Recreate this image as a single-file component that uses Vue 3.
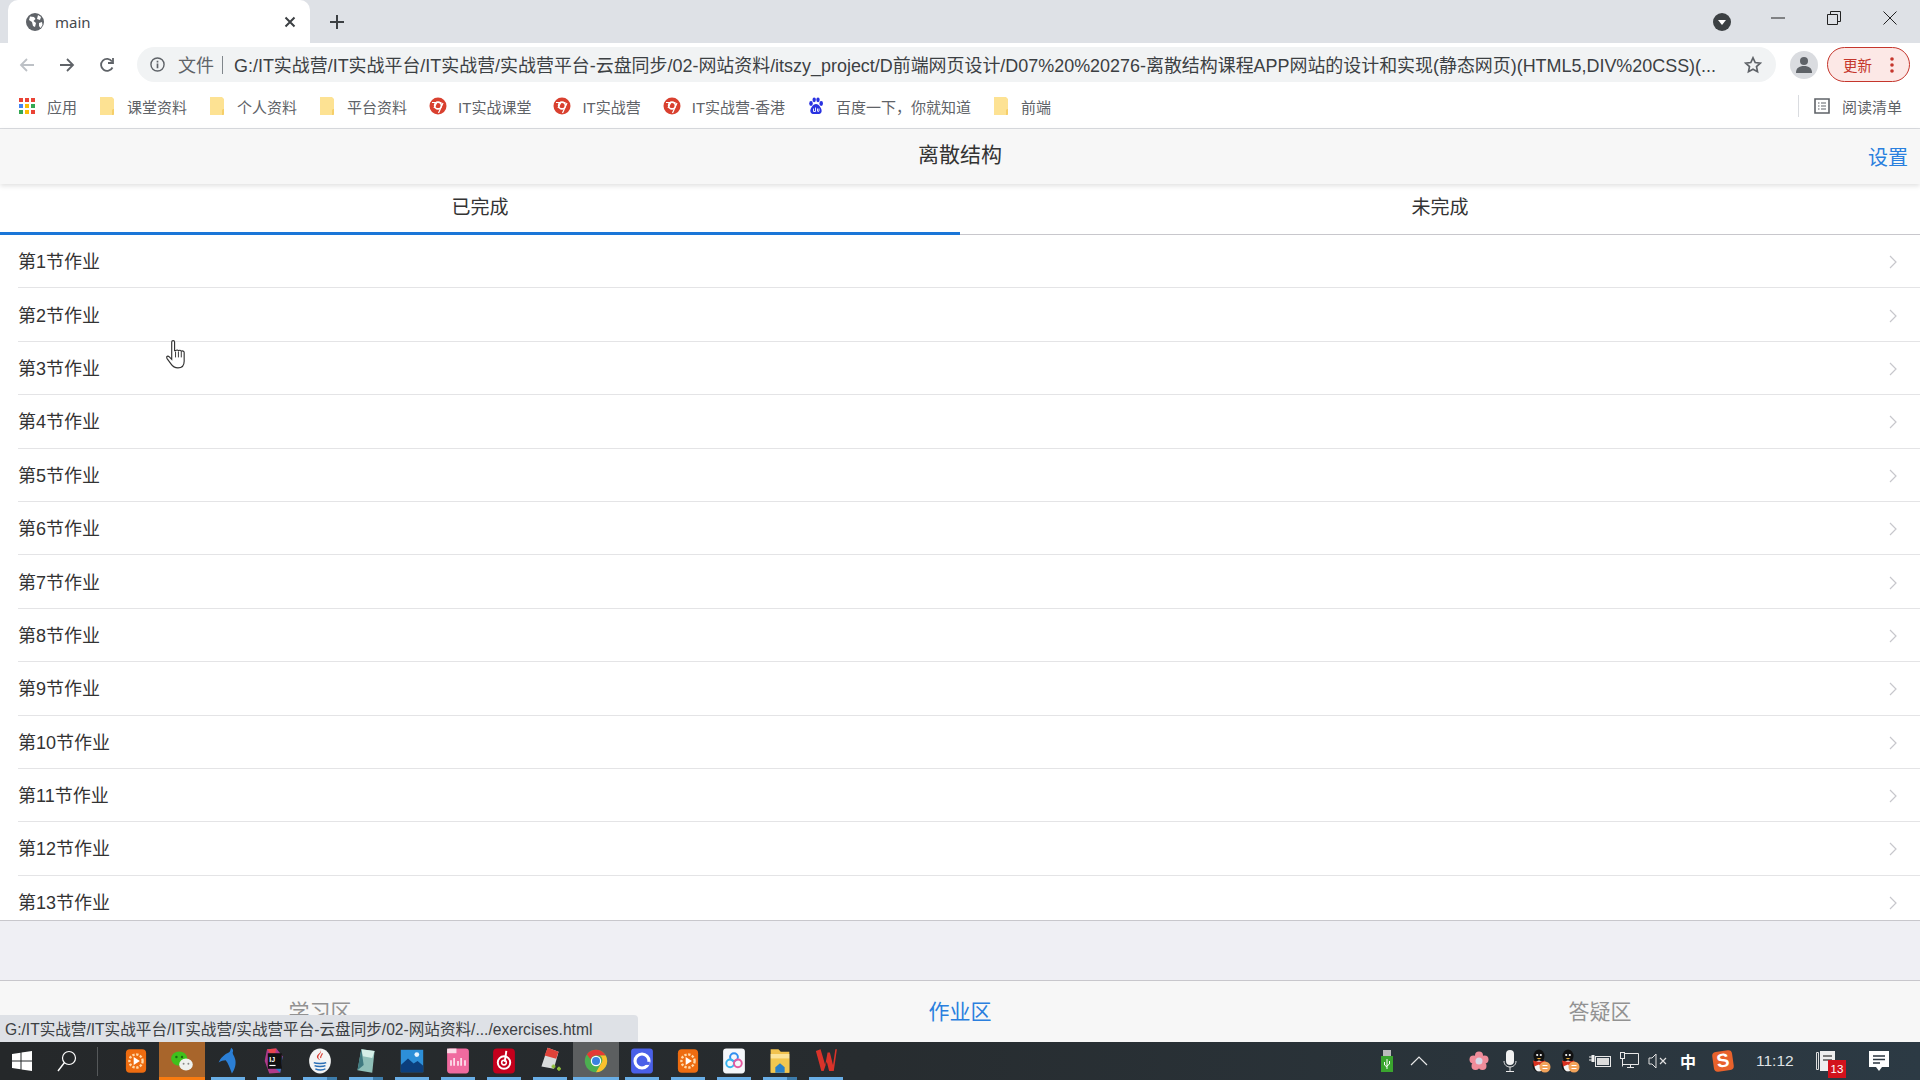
<script setup>
const bookmarks = [
  { icon: 'bm-apps', label: '应用' },
  { icon: 'bm-folder', label: '课堂资料' },
  { icon: 'bm-folder', label: '个人资料' },
  { icon: 'bm-folder', label: '平台资料' },
  { icon: 'bm-it', label: 'IT实战课堂' },
  { icon: 'bm-it', label: 'IT实战营' },
  { icon: 'bm-it', label: 'IT实战营-香港' },
  { icon: 'bm-baidu', label: '百度一下，你就知道' },
  { icon: 'bm-folder', label: '前端' }
]

const rows = Array.from({ length: 13 }, (_, i) => `第${i + 1}节作业`)

const taskIcons = [
  { icon: 'ti-orange' },
  { icon: 'ti-wechat', state: 'alert' },
  { icon: 'ti-dolphin', state: 'open' },
  { icon: 'ti-idea', state: 'open' },
  { icon: 'ti-java', state: 'stack' },
  { icon: 'ti-note', state: 'stack' },
  { icon: 'ti-photo', state: 'open' },
  { icon: 'ti-pink', state: 'open' },
  { icon: 'ti-music', state: 'open' },
  { icon: 'ti-rednote', state: 'open' },
  { icon: 'ti-chrome', state: 'active' },
  { icon: 'ti-blue', state: 'open' },
  { icon: 'ti-orange', state: 'open' },
  { icon: 'ti-cloud', state: 'open' },
  { icon: 'ti-explorer', state: 'stack' },
  { icon: 'ti-wps', state: 'open' }
]

const trayIcons = [
  { icon: 'tr-usb', width: 32, gap: 0 },
  { icon: 'tr-up', width: 32, gap: 29 },
  { icon: 'tr-flower', width: 30, gap: 0 },
  { icon: 'tr-mic', width: 31, gap: 0 },
  { icon: 'tr-qq', width: 31, gap: 0 },
  { icon: 'tr-qq', width: 28, gap: 0 },
  { icon: 'tr-battery', width: 31, gap: 0 },
  { icon: 'tr-monitor', width: 28, gap: 0 },
  { icon: 'tr-speaker', width: 30, gap: 0 }
]
</script>

<template>
  <div class="screen">
    <svg class="sprite" aria-hidden="true">
      <defs>
        <symbol id="bm-apps" viewBox="0 0 16 16">
          <rect x="0" y="0" width="4" height="4" fill="#ea4335" /><rect x="6" y="0" width="4" height="4" fill="#ea4335" /><rect x="12" y="0" width="4" height="4" fill="#ea4335" />
          <rect x="0" y="6" width="4" height="4" fill="#4285f4" /><rect x="6" y="6" width="4" height="4" fill="#fbbc05" /><rect x="12" y="6" width="4" height="4" fill="#34a853" />
          <rect x="0" y="12" width="4" height="4" fill="#34a853" /><rect x="6" y="12" width="4" height="4" fill="#fbbc05" /><rect x="12" y="12" width="4" height="4" fill="#ea4335" />
        </symbol>
        <symbol id="bm-folder" viewBox="0 0 16 18">
          <path d="M1 0h12l2 2v15a1 1 0 0 1-1 1H1z" fill="#fde293" />
          <path d="M14 12h1v5a1 1 0 0 1-1 1h-1v-5z" fill="#f6cf6a" />
        </symbol>
        <symbol id="bm-it" viewBox="0 0 18 18">
          <circle cx="9" cy="9" r="8.5" fill="#d9402f" />
          <circle cx="9" cy="8.5" r="3.4" fill="none" stroke="#fff" stroke-width="1.6" />
          <path d="M3 5.5h9.5M14 6l-4.5 10M5 11l3-6" stroke="#fff" stroke-width="1.2" fill="none" />
        </symbol>
        <symbol id="bm-baidu" viewBox="0 0 18 18">
          <ellipse cx="4" cy="6.5" rx="1.8" ry="2.4" fill="#2932e1" />
          <ellipse cx="7.2" cy="2.8" rx="1.7" ry="2.4" fill="#2932e1" />
          <ellipse cx="11" cy="2.8" rx="1.7" ry="2.4" fill="#2932e1" />
          <ellipse cx="14.2" cy="6.5" rx="1.8" ry="2.4" fill="#2932e1" />
          <path d="M9 7c3 0 6.500 5 5.500 8-.8 2.500-3.500 2-5.500 2s-4.700.5-5.500-2C2.500 12 6 7 9 7z" fill="#2932e1" />
          <path d="M6.500 11.500v3h2v-4M10.500 11.500v2.500c0 .7 1.500.7 1.500 0v-2.500" stroke="#fff" stroke-width=".9" fill="none" />
        </symbol>

        <symbol id="ti-orange" viewBox="0 0 30 36">
          <rect x="2" y="3" width="26" height="30" rx="5" fill="#ee6c10" />
          <circle cx="15" cy="18" r="8.500" fill="none" stroke="#ffd9a8" stroke-width="3" stroke-dasharray="3 2" />
          <path d="M12 13l8 5-8 5z" fill="#fff" />
        </symbol>
        <symbol id="ti-wechat" viewBox="0 0 30 30">
          <ellipse cx="11.500" cy="12" rx="10" ry="9" fill="#3fc11c" />
          <circle cx="8" cy="10" r="1.500" fill="#1b6b10" /><circle cx="15" cy="10" r="1.500" fill="#1b6b10" />
          <ellipse cx="20" cy="19.500" rx="8.500" ry="7.500" fill="#eef1ee" />
          <circle cx="17" cy="18.500" r="1.200" fill="#888" /><circle cx="23" cy="18.500" r="1.200" fill="#888" />
        </symbol>
        <symbol id="ti-dolphin" viewBox="0 0 30 36">
          <path d="M19 1c-1 3-1 5-3 6-5 2-11 7-13 13 3-2 6-3 9-3 3 3 5 9 8 17 4-6 6-13 4-19-1-4-3-5-3-8 1-2 1-4-2-6z" fill="#2b7fd6" />
        </symbol>
        <symbol id="ti-idea" viewBox="0 0 30 36">
          <path d="M6 3l12-1 8 10-3 21-14 1-6-16z" fill="#b03a8c" />
          <path d="M6 3l12-1-3 12z" fill="#e9474e" />
          <path d="M26 12l-3 21-8-7z" fill="#2a7fcc" />
          <rect x="7" y="8" width="18" height="20" fill="#111" />
          <text x="9" y="19" fill="#fff" font-size="9" font-weight="700" font-family="Liberation Sans, sans-serif">IJ</text>
          <rect x="9" y="23" width="8" height="1.500" fill="#fff" />
        </symbol>
        <symbol id="ti-java" viewBox="0 0 30 36">
          <ellipse cx="15" cy="18" rx="14" ry="16" fill="#f3f4f4" />
          <path d="M16 4c2 4-4 6-3 10 .4 1.500 2 2 2 3-1-.5-4-2-4-4 0-4 6-5 5-9z" fill="#d8382c" />
          <path d="M18 8c0 2-3 4-2 6" stroke="#d8382c" stroke-width="1.500" fill="none" />
          <path d="M7 20c3 1.500 13 1.500 16 0M8 24c3 1.500 11 1.500 14 0M9 28c4 2 10 2 13 0" stroke="#2b6fb5" stroke-width="1.800" fill="none" />
        </symbol>
        <symbol id="ti-note" viewBox="0 0 30 36">
          <path d="M9 3l17 2-3 28-19-3z" fill="#8fbfb8" />
          <path d="M9 3l17 2-3 9-12-2z" fill="#d5efe8" />
          <path d="M4 30l5-27 3 20z" fill="#3f7a80" />
        </symbol>
        <symbol id="ti-photo" viewBox="0 0 30 30">
          <rect x="1" y="1" width="28" height="28" fill="#2d8fd8" />
          <path d="M1 29V20l9-8 7 6 5-3 7 6v8z" fill="#0c3f7d" />
          <circle cx="21" cy="7" r="3" fill="#e8f4ff" />
        </symbol>
        <symbol id="ti-pink" viewBox="0 0 30 36">
          <rect x="1" y="2" width="28" height="32" rx="4" fill="#f06a9f" />
          <rect x="1" y="2" width="12" height="6" fill="#fbdce8" />
          <path d="M6 24v-7M10 24v-10M15 24v-6M19 24v-10M24 24v-7" stroke="#fde3ee" stroke-width="2.200" />
        </symbol>
        <symbol id="ti-music" viewBox="0 0 30 36">
          <rect x="1" y="2" width="28" height="32" rx="5" fill="#c4001c" />
          <circle cx="15" cy="20" r="8" fill="none" stroke="#fff" stroke-width="2.500" />
          <circle cx="15" cy="20" r="3" fill="none" stroke="#fff" stroke-width="2" />
          <path d="M18 5l-2 14" stroke="#fff" stroke-width="2.500" />
        </symbol>
        <symbol id="ti-rednote" viewBox="0 0 30 36">
          <path d="M12 1l14 5-6 22-16-3z" fill="#d9dcdc" />
          <path d="M12 1l14 5-3 9-15-4z" fill="#e0433a" />
          <path d="M17 25h5M19.500 22.500v5M24 28h5M26.500 25.500v5" stroke="#8fbf3a" stroke-width="2.500" />
        </symbol>
        <symbol id="ti-chrome" viewBox="0 0 30 30">
          <circle cx="15" cy="15" r="14" fill="#4caf50" />
          <path d="M15 1a14 14 0 0 1 12.100 7H15a7 7 0 0 0-6.700 5L3.600 6.800A14 14 0 0 1 15 1z" fill="#e53935" />
          <path d="M27.100 8A14 14 0 0 1 15 29l6.100-10.500A7 7 0 0 0 20 8z" fill="#fbc02d" />
          <circle cx="15" cy="15" r="6.500" fill="#fff" />
          <circle cx="15" cy="15" r="5" fill="#3b82e0" />
        </symbol>
        <symbol id="ti-blue" viewBox="0 0 30 36">
          <rect x="1" y="2" width="28" height="32" rx="4" fill="#4a60e8" />
          <circle cx="15" cy="18" r="9" fill="none" stroke="#fff" stroke-width="4" />
          <rect x="18" y="19" width="7" height="4" fill="#4a60e8" />
        </symbol>
        <symbol id="ti-cloud" viewBox="0 0 30 36">
          <rect x="1" y="2" width="28" height="32" rx="4" fill="#f5f7fa" />
          <circle cx="15" cy="13" r="5" fill="none" stroke="#2f8ef0" stroke-width="2.500" />
          <circle cx="10" cy="21" r="5" fill="none" stroke="#39b5f0" stroke-width="2.500" />
          <circle cx="20" cy="21" r="5" fill="none" stroke="#e65aa0" stroke-width="2.500" />
        </symbol>
        <symbol id="ti-explorer" viewBox="0 0 30 36">
          <path d="M3 3h10l3 3h11v27H3z" fill="#f1c24e" />
          <rect x="3" y="9" width="24" height="6" fill="#fbe39a" />
          <rect x="3" y="15" width="24" height="18" fill="#f2c750" />
          <path d="M9 26l6-5 6 5v7H9z" fill="#2a80c8" />
        </symbol>
        <symbol id="ti-wps" viewBox="0 0 30 36">
          <path d="M2 5l6-2 6 20 3-16h3l4 16 3-20h2l-4 28h-6l-3-12-4 12H9z" fill="#d9332a" />
        </symbol>

        <symbol id="tr-usb" viewBox="0 0 14 24">
          <rect x="3" y="1" width="8" height="6" fill="#bbb" />
          <rect x="1" y="7" width="12" height="16" fill="#3aa52e" />
          <path d="M7 10v10M4.500 13v3l2.500 2M9.500 12v3l-2.500 2" stroke="#fff" stroke-width="1" fill="none" />
        </symbol>
        <symbol id="tr-up" viewBox="0 0 18 18">
          <path d="M1 13l8-8 8 8" fill="none" stroke="#e8e8e8" stroke-width="1.200" />
        </symbol>
        <symbol id="tr-flower" viewBox="0 0 20 20">
          <circle cx="10" cy="4.500" r="4" fill="#f08c9a" /><circle cx="4.500" cy="8.500" r="4" fill="#f08c9a" /><circle cx="15.500" cy="8.500" r="4" fill="#f08c9a" /><circle cx="6.500" cy="15" r="4" fill="#f08c9a" /><circle cx="13.500" cy="15" r="4" fill="#f08c9a" />
          <circle cx="10" cy="10" r="3.500" fill="#d8d8e8" />
        </symbol>
        <symbol id="tr-mic" viewBox="0 0 16 24">
          <rect x="4" y="1" width="8" height="15" rx="4" fill="#f2f2f2" />
          <path d="M2 12c0 8 12 8 12 0M8 18v4M4 22.500h8" stroke="#e8e8e8" stroke-width="1" fill="none" />
        </symbol>
        <symbol id="tr-qq" viewBox="0 0 20 24">
          <ellipse cx="8" cy="7" rx="5.500" ry="6.500" fill="#111" />
          <ellipse cx="8" cy="16" rx="6.500" ry="7" fill="#111" />
          <ellipse cx="8" cy="17" rx="4.500" ry="5.500" fill="#f4f4f4" />
          <circle cx="6.200" cy="6" r="1.100" fill="#fff" /><circle cx="9.800" cy="6" r="1.100" fill="#fff" />
          <path d="M5.500 9h5l-2.500 1.500z" fill="#f2b33a" />
          <path d="M2 11.500c3.500 1.500 8.500 1.500 12 0l.5 2-4 1 .5 4-3-3-5 2z" fill="#d7301f" />
          <circle cx="14" cy="18" r="5.500" fill="#f2a35a" />
          <path d="M11.500 16.500h5M11.500 19.500h5" stroke="#fff" stroke-width="1.200" />
        </symbol>
        <symbol id="tr-battery" viewBox="0 0 22 16">
          <rect x="6.500" y="3.500" width="15" height="10" fill="#2a3640" stroke="#e8e8e8" />
          <rect x="8" y="5" width="12" height="7" fill="#dcdcdc" />
          <path d="M0 4h3M0 7h3" stroke="#eee" /><rect x="2.500" y="2" width="3" height="7" fill="#eee" />
        </symbol>
        <symbol id="tr-monitor" viewBox="0 0 20 20">
          <path d="M3.500 2.500h16v11h-16zM8 16.500h7M11.500 13.500v3" fill="none" stroke="#e8e8e8" />
          <rect x="1.500" y="1.500" width="4" height="6" fill="#2a3640" stroke="#e8e8e8" />
          <path d="M3.500 7.500v8" stroke="#e8e8e8" />
        </symbol>
        <symbol id="tr-speaker" viewBox="0 0 20 16">
          <path d="M1 5h3l4-4v14l-4-4H1z" fill="none" stroke="#e0e0e0" />
          <path d="M12 5l6 6M18 5l-6 6" stroke="#e0e0e0" stroke-width="1.200" />
        </symbol>
      </defs>
    </svg>

    <div class="tabstrip">
      <div class="tab">
        <svg class="globe" viewBox="0 0 18 18" width="18" height="18">
          <circle cx="9" cy="9" r="9" fill="#5f6368" />
          <path d="M4 3.500l4 .5 1.500 2-2 2 2.500 2-1 4-2-1-1-4-3-2zM12 2l3 2-1 3-3-1zM13 10l3-1 .5 3-2 3-1.500-2z" fill="#fff" />
        </svg>
        <span class="tab-title">main</span>
        <svg class="tab-close" viewBox="0 0 12 12" width="12" height="12"><path d="M1.500 1.500l9 9M10.500 1.500l-9 9" stroke="#3c4043" stroke-width="2" /></svg>
      </div>
      <svg class="new-tab" viewBox="0 0 16 16" width="16" height="16"><path d="M8 1v14M1 8h14" stroke="#3c4043" stroke-width="2" /></svg>
      <svg class="tab-search" viewBox="0 0 18 18" width="18" height="18">
        <circle cx="9" cy="9" r="9" fill="#3c4043" />
        <path d="M5 7h8l-4 5z" fill="#fff" />
      </svg>
      <div class="win-btn"><svg viewBox="0 0 14 14" width="14" height="14"><path d="M0 7h14" stroke="#222" stroke-width="1" /></svg></div>
      <div class="win-btn"><svg viewBox="0 0 14 14" width="14" height="14"><path d="M.5 3.500h10v10H.5zM3.500 3.500v-3h10v10h-3" fill="none" stroke="#222" /></svg></div>
      <div class="win-btn"><svg viewBox="0 0 14 14" width="14" height="14"><path d="M.5.500l13 13M13.500.500l-13 13" stroke="#222" /></svg></div>
    </div>

    <div class="toolbar">
      <svg class="nav-icon" viewBox="0 0 16 16" width="16" height="16"><path d="M15 8H2M8 2L2 8l6 6" fill="none" stroke="#bdc1c6" stroke-width="1.800" /></svg>
      <svg class="nav-icon" viewBox="0 0 16 16" width="16" height="16"><path d="M1 8h13M8 2l6 6-6 6" fill="none" stroke="#5f6368" stroke-width="1.800" /></svg>
      <svg class="nav-icon" viewBox="0 0 16 16" width="16" height="16"><path d="M13.500 10.500A6 6 0 1 1 13 4.500M14 1v5H9" fill="none" stroke="#5f6368" stroke-width="1.800" /></svg>
      <div class="omnibox">
        <svg viewBox="0 0 16 16" width="15" height="15" class="info"><circle cx="8" cy="8" r="7" fill="none" stroke="#5f6368" stroke-width="1.500" /><path d="M8 7v5M8 4v1.800" stroke="#5f6368" stroke-width="1.800" /></svg>
        <span class="scheme">文件</span>
        <span class="pipe"></span>
        <span class="url">G:/IT实战营/IT实战平台/IT实战营/实战营平台-云盘同步/02-网站资料/itszy_project/D前端网页设计/D07%20%20276-离散结构课程APP网站的设计和实现(静态网页)(HTML5,DIV%20CSS)(...</span>
        <svg viewBox="0 0 18 18" width="18" height="18" class="star"><path d="M9 1.800l2.200 4.700 5.100.6-3.800 3.500 1 5.100L9 13.200l-4.500 2.500 1-5.100L1.700 7.100l5.100-.6z" fill="none" stroke="#5f6368" stroke-width="1.700" /></svg>
      </div>
      <div class="avatar">
        <svg viewBox="0 0 18 18" width="18" height="18"><circle cx="9" cy="5" r="4" fill="#5f6368" /><path d="M1 17c0-5 3-7 8-7s8 2 8 7z" fill="#5f6368" /></svg>
      </div>
      <div class="update">
        <span>更新</span>
        <svg viewBox="0 0 4 16" width="4" height="16"><circle cx="2" cy="2" r="1.800" fill="#c5362c" /><circle cx="2" cy="8" r="1.800" fill="#c5362c" /><circle cx="2" cy="14" r="1.800" fill="#c5362c" /></svg>
      </div>
    </div>

    <div class="bookmarks">
      <div v-for="b in bookmarks" :key="b.label" class="bookmark">
        <svg :class="['bm-icon', b.icon]"><use :href="'#' + b.icon" /></svg>
        <span>{{ b.label }}</span>
      </div>
      <div class="reading">
        <svg viewBox="0 0 16 16" width="16" height="16"><path d="M1 1h14v14H1z" fill="none" stroke="#5f6368" stroke-width="1.600" /><path d="M4 5h1.500M7 5h5M4 8h1.500M7 8h5M4 11h1.500M7 11h5" stroke="#5f6368" stroke-width="1.200" /></svg>
        <span>阅读清单</span>
      </div>
    </div>

    <header class="nav-bar">
      <span class="nav-title">离散结构</span>
      <a class="nav-right">设置</a>
    </header>

    <div class="segments">
      <div class="segment active">已完成</div>
      <div class="segment">未完成</div>
    </div>

    <ul class="list">
      <li v-for="row in rows" :key="row" class="row">
        <span class="row-text">{{ row }}</span>
        <svg class="chevron" viewBox="0 0 8 14" width="8" height="14"><path d="M1 1l6 6-6 6" fill="none" stroke="#c7c7cc" stroke-width="1.200" /></svg>
      </li>
    </ul>

    <div class="gap"></div>

    <footer class="app-tabs">
      <div class="app-tab">学习区</div>
      <div class="app-tab current">作业区</div>
      <div class="app-tab">答疑区</div>
    </footer>

    <div class="taskbar">
      <div class="start">
        <svg viewBox="0 0 20 20" width="20" height="20"><path d="M0 3l8.500-1.200V9.500H0zM9.500 1.600L20 0v9.500H9.500zM0 10.500h8.500v7.700L0 17zM9.500 10.500H20V20L9.500 18.400z" fill="#fff" /></svg>
      </div>
      <div class="search">
        <svg viewBox="0 0 20 22" width="20" height="22"><circle cx="12" cy="8" r="6.500" fill="none" stroke="#fff" stroke-width="1.200" /><path d="M7.500 12.500L1 21" stroke="#fff" stroke-width="1.400" /></svg>
      </div>
      <div class="task-sep"></div>
      <div v-for="(t, i) in taskIcons" :key="i" :class="['task', t.state]">
        <svg width="24" height="28"><use :href="'#' + t.icon" /></svg>
      </div>
      <div class="tray">
        <div v-for="(t, i) in trayIcons" :key="i" class="tray-item" :style="{ width: t.width + 'px', marginRight: t.gap + 'px' }">
          <svg :class="t.icon"><use :href="'#' + t.icon" /></svg>
        </div>
        <span class="ime">中</span>
        <div class="sogou">S</div>
        <span class="clock">11:12</span>
        <div class="notes">
          <svg viewBox="0 0 20 22" width="20" height="22"><path d="M.5 2.500h2v17h-2z" fill="none" stroke="#ddd" /><rect x="4" y="1" width="15" height="20" fill="#eee" /><path d="M7 6h9M7 10h9" stroke="#555" stroke-width="1.500" /></svg>
          <span class="badge">13</span>
        </div>
        <div class="action">
          <svg viewBox="0 0 20 22" width="20" height="22"><path d="M0 1h20v16h-7l-3 4-3-4H0z" fill="#fff" /><path d="M4 6h12M4 9.500h12M4 13h7" stroke="#2b3640" stroke-width="1.300" /></svg>
        </div>
      </div>
    </div>

    <div class="status-bubble">G:/IT实战营/IT实战平台/IT实战营/实战营平台-云盘同步/02-网站资料/.../exercises.html</div>

    <svg class="cursor" viewBox="0 0 24 31" width="23" height="30">
      <path d="M7 2c0-2 3-2 3 0v9l1 0c1-1 2.500-1 3 0 1-.8 2.500-.6 3 .5 1-.5 3-.2 3 1.500v9c0 4-2 7-6.500 7-4 0-5.500-1.500-7.500-4.500L2 19c-1-2 1-3 2.500-1.500L7 20z" fill="#fff" stroke="#333" stroke-width="1.200" />
      <path d="M11 12v6M14 12v6M17 12v6" stroke="#333" stroke-width="1" />
    </svg>
  </div>
</template>

<style scoped>
.screen {
  position: relative;
  width: 1920px;
  height: 1080px;
  display: flex;
  flex-direction: column;
  overflow: hidden;
  background: #fff;
  font-family: "Liberation Sans", "Noto Sans CJK SC", sans-serif;
  color: #222;
}

.sprite {
  position: absolute;
  width: 0;
  height: 0;
}

/* browser chrome */
.tabstrip {
  flex: 0 0 43px;
  display: flex;
  align-items: center;
  padding-left: 8px;
  background: #dee1e6;
}

.tab {
  align-self: stretch;
  width: 302px;
  display: flex;
  align-items: center;
  padding: 0 14px 0 18px;
  box-sizing: border-box;
  background: #fff;
  border-radius: 10px 10px 0 0;
}

.tab-title {
  flex: 1;
  margin-left: 11px;
  font-family: "Noto Sans", sans-serif;
  font-size: 15px;
  color: #45494d;
}

.new-tab {
  margin-left: 19px;
}

.tab-search {
  margin-left: 1368px;
}

.win-btn {
  width: 56px;
  height: 36px;
  margin-top: -8px;
  display: flex;
  align-items: center;
  justify-content: center;
}

.win-btn:nth-of-type(2) {
  margin-left: 19px;
}

.toolbar {
  flex: 0 0 43px;
  display: flex;
  align-items: center;
  padding-left: 19px;
  box-sizing: border-box;
}

.nav-icon {
  margin-right: 24px;
}

.omnibox {
  width: 1639px;
  height: 35px;
  margin-left: -2px;
  display: flex;
  align-items: center;
  padding: 0 14px 0 13px;
  box-sizing: border-box;
  background: #f1f3f4;
  border-radius: 18px;
}

.info {
  flex: none;
}

.scheme {
  margin-left: 13px;
  padding-bottom: 2px;
  font-size: 18px;
  color: #5f6368;
}

.pipe {
  width: 1px;
  height: 18px;
  margin: 0 11px 0 8px;
  background: #80868b;
}

.url {
  flex: none;
  padding-bottom: 2px;
  font-size: 17.950px;
  white-space: nowrap;
  color: #3c4043;
}

.star {
  flex: none;
  margin-left: auto;
}

.avatar {
  width: 28px;
  height: 28px;
  margin-left: 14px;
  display: flex;
  align-items: center;
  justify-content: center;
  background: #dadce0;
  border-radius: 50%;
}

.update {
  width: 83px;
  height: 35px;
  margin-left: 9px;
  display: flex;
  align-items: center;
  padding-left: 15px;
  box-sizing: border-box;
  background: #fce8e6;
  border: 1px solid #c5362c;
  border-radius: 18px;
  font-size: 14.500px;
  color: #c5362c;
}

.update svg {
  margin-left: 18px;
}

.bookmarks {
  flex: 0 0 43px;
  display: flex;
  align-items: center;
  padding: 0 18px 2px 19px;
  box-sizing: border-box;
  border-bottom: 1px solid #dadce0;
  font-size: 15px;
  color: #5f6368;
}

.bookmark {
  display: flex;
  align-items: center;
  margin-right: 22px;
  white-space: nowrap;
}

.bm-icon {
  width: 18px;
  height: 18px;
  margin-right: 11px;
}

.bm-apps {
  width: 16px;
  height: 16px;
  margin-right: 12px;
}

.bm-folder {
  width: 16px;
  margin-right: 12px;
}

.reading {
  margin-left: auto;
  display: flex;
  align-items: center;
  height: 22px;
  padding-left: 15px;
  border-left: 1px solid #dadce0;
}

.reading span {
  margin-left: 12px;
}

/* page */
.nav-bar {
  position: relative;
  z-index: 1;
  flex: 0 0 55px;
  display: flex;
  align-items: center;
  justify-content: center;
  padding-bottom: 7px;
  box-sizing: border-box;
  background: #f7f7f7;
  box-shadow: 0 2px 5px rgba(0, 0, 0, 0.12);
}

.nav-title {
  font-size: 21px;
  color: #333;
}

.nav-right {
  position: absolute;
  right: 12px;
  top: 13px;
  font-size: 20px;
  color: #2a7fde;
}

.segments {
  flex: 0 0 51px;
  display: flex;
  box-sizing: border-box;
  border-bottom: 1px solid #c8c7cc;
}

.segment {
  flex: 1;
  display: flex;
  align-items: center;
  justify-content: center;
  padding-bottom: 8px;
  font-size: 19px;
  color: #333;
}

.segment.active {
  margin-bottom: -1px;
  border-bottom: 3px solid #1a76d8;
  padding-bottom: 5px;
}

.list {
  flex: 0 0 685px;
  margin: 0;
  padding: 0;
  list-style: none;
  overflow: hidden;
  border-bottom: 1px solid #c8c7cc;
}

.row {
  position: relative;
  height: 53.400px;
  display: flex;
  align-items: center;
  justify-content: space-between;
  margin-left: 18px;
  padding-right: 23px;
  box-sizing: border-box;
  border-bottom: 1px solid #e4e4e6;
  font-size: 18px;
  color: #333;
}

.row-text {
  margin-bottom: 2px;
}

.chevron {
  margin-top: 2px;
}

.gap {
  flex: 0 0 59px;
  background: #efeff4;
}

.app-tabs {
  flex: 0 0 62px;
  display: flex;
  box-sizing: border-box;
  padding-bottom: 3px;
  background: #f7f7f7;
  border-top: 1px solid #c8c7cc;
}

.app-tab {
  flex: 1;
  display: flex;
  align-items: center;
  justify-content: center;
  font-size: 21px;
  color: #929292;
}

.app-tab.current {
  color: #2a7fde;
}

/* windows taskbar */
.taskbar {
  flex: 0 0 38px;
  display: flex;
  align-items: stretch;
  background: linear-gradient(90deg, #25282a 0%, #272c2f 45%, #2c3a44 100%);
}

.start {
  width: 44px;
  display: flex;
  align-items: center;
  justify-content: center;
}

.search {
  width: 46px;
  display: flex;
  align-items: center;
  justify-content: center;
}

.task-sep {
  width: 1px;
  margin: 5px 15px 4px 7px;
  background: #55585a;
}

.task {
  position: relative;
  width: 46px;
  display: flex;
  align-items: center;
  justify-content: center;
}

.task.alert {
  background: #a8652b;
  box-shadow: inset 0 -3px 0 #f97b10;
}

.task.active {
  background: #5c5f60;
  box-shadow: inset 0 -3px 0 #69aee6;
}

.task.open::after,
.task.stack::after {
  content: "";
  position: absolute;
  left: 6px;
  right: 6px;
  bottom: 0;
  height: 3px;
  background: #69aee6;
}

.task.stack::after {
  background: linear-gradient(90deg, #69aee6 70%, #3d7cab 70%);
}

.tray {
  margin-left: auto;
  display: flex;
  align-items: center;
  padding-right: 31px;
}

.tray-item {
  height: 100%;
  display: flex;
  align-items: center;
  justify-content: center;
}

.tr-usb {
  width: 14px;
  height: 24px;
}

.tr-up {
  width: 18px;
  height: 18px;
}

.tr-flower {
  width: 20px;
  height: 20px;
}

.tr-mic {
  width: 16px;
  height: 24px;
}

.tr-qq {
  width: 20px;
  height: 24px;
}

.tr-battery {
  width: 22px;
  height: 16px;
}

.tr-monitor {
  width: 20px;
  height: 20px;
}

.tr-speaker {
  width: 20px;
  height: 16px;
}

.ime {
  width: 30px;
  text-align: center;
  font-size: 16px;
  font-weight: 700;
  color: #fff;
}

.sogou {
  width: 20px;
  height: 20px;
  margin-left: 10px;
  display: flex;
  align-items: center;
  justify-content: center;
  background: #e8622c;
  border-radius: 4px;
  font-size: 19px;
  font-weight: 700;
  color: #fff;
  transform: rotate(-8deg);
}

.clock {
  width: 38px;
  margin-left: 23px;
  font-size: 15.500px;
  color: #dfe3e6;
}

.notes {
  position: relative;
  width: 22px;
  height: 22px;
  margin-left: 22px;
}

.badge {
  position: absolute;
  left: 12px;
  top: 10px;
  width: 18px;
  height: 18px;
  background: #d3121c;
  font-size: 11.500px;
  line-height: 18px;
  text-align: center;
  color: #fff;
}

.action {
  margin-left: 31px;
  height: 22px;
}

.status-bubble {
  position: absolute;
  left: 0;
  top: 1015px;
  width: 638px;
  height: 27px;
  padding-left: 5px;
  box-sizing: border-box;
  background: #dee1e6;
  border-radius: 0 4px 0 0;
  font-size: 15.600px;
  line-height: 29px;
  color: #3c4043;
}

.cursor {
  position: absolute;
  left: 165px;
  top: 340px;
}
</style>

<style>
html,
body {
  margin: 0;
  overflow: hidden;
}
</style>
